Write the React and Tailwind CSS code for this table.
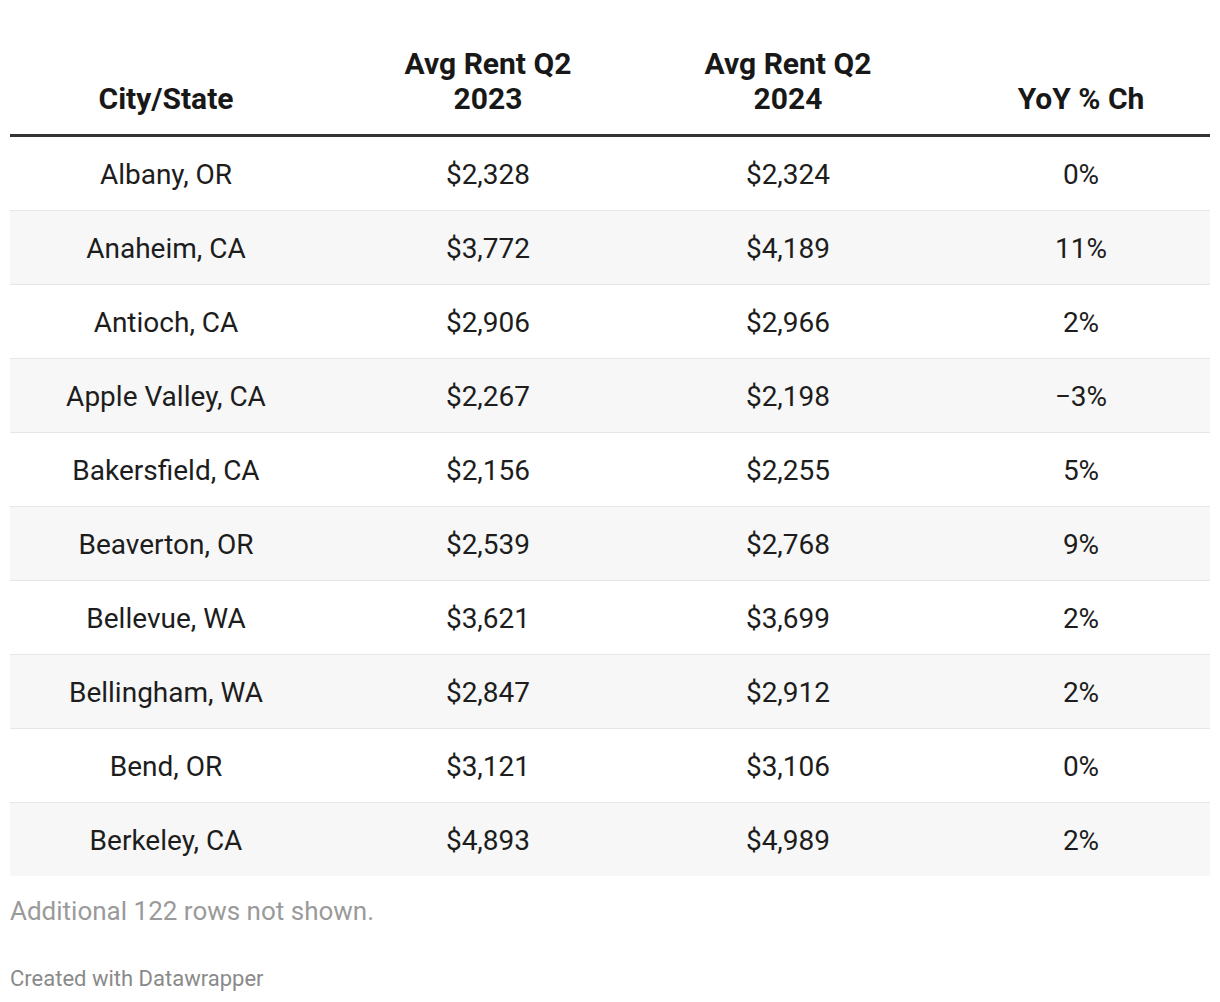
const rows = [
  ["Albany, OR", "$2,328", "$2,324", "0%"],
  ["Anaheim, CA", "$3,772", "$4,189", "11%"],
  ["Antioch, CA", "$2,906", "$2,966", "2%"],
  ["Apple Valley, CA", "$2,267", "$2,198", "\u22123%"],
  ["Bakersfield, CA", "$2,156", "$2,255", "5%"],
  ["Beaverton, OR", "$2,539", "$2,768", "9%"],
  ["Bellevue, WA", "$3,621", "$3,699", "2%"],
  ["Bellingham, WA", "$2,847", "$2,912", "2%"],
  ["Bend, OR", "$3,121", "$3,106", "0%"],
  ["Berkeley, CA", "$4,893", "$4,989", "2%"],
];

const cols = "grid grid-cols-[312px_332px_268px_288px]";

export default function App() {
  return (
    <div className="bg-white min-h-screen px-[10px] pt-[46px] font-['Roboto',sans-serif]">
      <div className={`${cols} border-b-[3px] border-[#333333] text-[30px] leading-[35px] font-bold text-[#181818] pb-[18px]`}>
        <div className="flex items-end justify-center text-center">City/State</div>
        <div className="flex items-end justify-center text-center">
          Avg Rent Q2
          <br />
          2023
        </div>
        <div className="flex items-end justify-center text-center">
          Avg Rent Q2
          <br />
          2024
        </div>
        <div className="flex items-end justify-center text-center pl-[30px]">YoY % Ch</div>
      </div>
      <div className="text-[28px] text-[#1d1d1d]">
        {rows.map((r, i) => (
          <div
            key={r[0]}
            className={`${cols} h-[74px] last:h-[73px] border-b border-[#e6e6e6] last:border-b-0 pt-[2px] ${i % 2 ? "bg-[#f7f7f7]" : "bg-white"}`}
          >
            <div className="flex items-center justify-center">{r[0]}</div>
            <div className="flex items-center justify-center">{r[1]}</div>
            <div className="flex items-center justify-center">{r[2]}</div>
            <div className="flex items-center justify-center pl-[30px]">{r[3]}</div>
          </div>
        ))}
      </div>
      <p className="mt-[16px] text-[26px] text-[#9a9a9a]">Additional 122 rows not shown.</p>
      <p className="mt-[31px] text-[22px] text-[#8a8a8a]">Created with Datawrapper</p>
    </div>
  );
}
